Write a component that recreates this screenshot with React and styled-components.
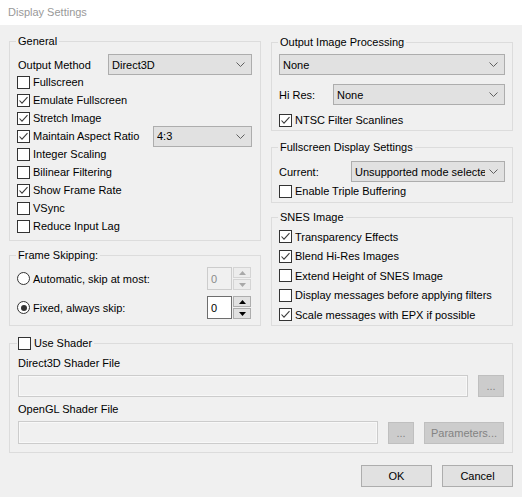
import React from 'react'
import styled, { createGlobalStyle } from 'styled-components'

const GlobalStyle = createGlobalStyle`
  html, body { margin: 0; padding: 0; }
  body {
    background: #f0f0f0;
    font-family: "Liberation Sans", Arial, sans-serif;
    font-size: 11px;
    color: #000;
  }
  * { box-sizing: border-box; }
`

const Window = styled.div`
  width: 522px;
  height: 497px;
  display: flex;
  flex-direction: column;
  background: #f0f0f0;
  overflow: hidden;
`

const TitleBar = styled.div`
  height: 25px;
  flex-shrink: 0;
  background: #fff;
  color: #999;
  padding: 0 0 1px 8px;
  display: flex;
  align-items: center;
  font-size: 11px;
`

const Content = styled.div`
  padding: 9px 9px 0 9px;
  display: flex;
  flex-direction: column;
`

const Columns = styled.div`
  display: grid;
  grid-template-columns: 252px 242px;
  column-gap: 10px;
  align-items: start;
`

const Column = styled.div`
  display: flex;
  flex-direction: column;
  padding-top: ${p => p.$pt || 0}px;
`

const Group = styled.fieldset`
  margin: ${p => p.$mt || 0}px 0 0 0;
  padding: ${p => p.$pt || 0}px ${p => p.$pr || 8}px 0 ${p => p.$pl || 7}px;
  border: 1px solid #dcdcdc;
  height: ${p => p.$h}px;
  min-width: 0;
`

const Legend = styled.legend`
  padding: 0 2px 0 ${p => p.$pl ?? 2}px;
  margin-left: -1px;
  line-height: 14px;
  font-size: 11px;
`

const Stack = styled.div`
  display: flex;
  flex-direction: column;
  gap: ${p => p.$gap || 0}px;
`

const Row = styled.div`
  display: flex;
  align-items: center;
  height: ${p => p.$h || 21}px;
  margin-top: ${p => p.$mt || 0}px;
  margin-bottom: ${p => p.$mb || 0}px;
`

const Label = styled.span`
  padding-left: ${p => p.$pl || 0}px;
  white-space: nowrap;
`

const CheckRow = styled.label`
  display: flex;
  align-items: center;
  gap: 3px;
  height: ${p => p.$h || 18}px;
  margin-top: ${p => p.$mt || 0}px;
  white-space: nowrap;
`

const Box = styled.span`
  width: 13px;
  height: 13px;
  flex-shrink: 0;
  border: 1px solid #333;
  background: #fff;
  display: inline-flex;
  align-items: center;
  justify-content: center;
`

const RadioCircle = styled.span`
  width: 13px;
  height: 13px;
  flex-shrink: 0;
  border: 1px solid #333;
  border-radius: 50%;
  background: #fff;
  display: inline-flex;
  align-items: center;
  justify-content: center;
  &::after {
    content: "";
    width: 6px;
    height: 6px;
    border-radius: 50%;
    background: ${p => (p.$on ? '#333' : 'transparent')};
  }
`

const RadioRow = styled.label`
  display: flex;
  align-items: center;
  gap: 3px;
  height: 23px;
  white-space: nowrap;
`

const SelectBox = styled.div`
  display: flex;
  align-items: center;
  width: ${p => p.$w}px;
  height: ${p => p.$h || 21}px;
  flex-shrink: 0;
  margin-left: auto;
  background: #e1e1e1;
  border: 1px solid #adadad;
  padding: 0 6px 0 3px;
  gap: 4px;
`

const SelectText = styled.span`
  flex: 1;
  min-width: 0;
  overflow: hidden;
  white-space: nowrap;
`

const Spinner = styled.div`
  display: flex;
  gap: 1px;
  height: 23px;
  margin-left: auto;
`

const SpinInput = styled.div`
  width: 25px;
  height: 23px;
  border: 1px solid ${p => (p.$off ? '#cccccc' : '#6e6e6e')};
  background: ${p => (p.$off ? '#f0f0f0' : '#fff')};
  color: ${p => (p.$off ? '#8a8a8a' : '#000')};
  padding-left: 3px;
  display: flex;
  align-items: center;
`

const SpinButtons = styled.div`
  width: 18px;
  display: flex;
  flex-direction: column;
  gap: 1px;
`

const SpinButton = styled.div`
  flex: 1;
  border: 1px solid ${p => (p.$off ? '#d4d4d4' : '#adadad')};
  background: ${p => (p.$off ? '#ececec' : '#e1e1e1')};
  display: flex;
  align-items: center;
  justify-content: center;
`

const TextBox = styled.div`
  width: ${p => p.$w}px;
  height: ${p => p.$h || 22}px;
  flex-shrink: 0;
  border: 1px solid #cccccc;
  box-shadow: inset 0 0 0 1px #f8f8f8;
  background: #f0f0f0;
`

const SmallButton = styled.div`
  width: ${p => p.$w}px;
  height: 22px;
  flex-shrink: 0;
  margin-left: 10px;
  background: #cccccc;
  border: 1px solid #bfbfbf;
  color: #838383;
  display: flex;
  align-items: center;
  justify-content: center;
  white-space: nowrap;
`

const ButtonBar = styled.div`
  display: flex;
  justify-content: flex-end;
  gap: 10px;
  margin-top: 12px;
`

const DialogButton = styled.button`
  width: 71px;
  height: 22px;
  background: #e1e1e1;
  border: 1px solid #adadad;
  font-family: inherit;
  font-size: 11px;
  color: #000;
  padding: 0;
`

const Chevron = () => (
  <svg width="9" height="5" viewBox="0 0 9 5">
    <path d="M0.5 0.5 L4.5 4.5 L8.5 0.5" fill="none" stroke="#606060" strokeWidth="1" />
  </svg>
)

const Arrow = ({ up, off }) => (
  <svg width="7" height="4" viewBox="0 0 7 4">
    <path d={up ? 'M0 4 L3.5 0 L7 4 Z' : 'M0 0 L3.5 4 L7 0 Z'} fill={off ? '#a8a8a8' : '#000'} />
  </svg>
)

const Check = ({ on, label, h, mt }) => (
  <CheckRow $h={h} $mt={mt}>
    <Box>
      {on && (
        <svg width="11" height="11" viewBox="0 0 11 11">
          <polyline points="1.5,5.5 4,8.2 9.5,2.2" fill="none" stroke="#3a3a3a" strokeWidth="1.1" />
        </svg>
      )}
    </Box>
    {label}
  </CheckRow>
)

const Select = ({ w, value, h }) => (
  <SelectBox $w={w} $h={h}>
    <SelectText>{value}</SelectText>
    <Chevron />
  </SelectBox>
)

const Spin = ({ off }) => (
  <Spinner>
    <SpinInput $off={off}>0</SpinInput>
    <SpinButtons>
      <SpinButton $off={off}><Arrow up off={off} /></SpinButton>
      <SpinButton $off={off}><Arrow off={off} /></SpinButton>
    </SpinButtons>
  </Spinner>
)

const generalChecks = [
  ['Fullscreen', false],
  ['Emulate Fullscreen', true],
  ['Stretch Image', true],
  ['Maintain Aspect Ratio', true],
  ['Integer Scaling', false],
  ['Bilinear Filtering', false],
  ['Show Frame Rate', true],
  ['VSync', false],
  ['Reduce Input Lag', false],
]

const snesChecks = [
  ['Transparency Effects', true],
  ['Blend Hi-Res Images', true],
  ['Extend Height of SNES Image', false],
  ['Display messages before applying filters', false],
  ['Scale messages with EPX if possible', true],
]

export default function App() {
  return (
    <Window>
      <GlobalStyle />
      <TitleBar>Display Settings</TitleBar>
      <Content>
        <Columns>
          <Column>
            <Group $h={207} $pt={6}>
              <Legend>General</Legend>
              <Row $h={21} $mb={-2}>
                <Label $pl={1}>Output Method</Label>
                <Select w={144} value="Direct3D" />
              </Row>
              {generalChecks.map(([label, on]) =>
                label === 'Maintain Aspect Ratio' ? (
                  <Row key={label} $h={18}>
                    <Check on={on} label={label} />
                    <Select w={99} value="4:3" />
                  </Row>
                ) : (
                  <Check key={label} on={on} label={label} />
                )
              )}
            </Group>
            <Group $mt={7} $h={78} $pt={5} $pr={9}>
              <Legend>Frame Skipping:</Legend>
              <Stack $gap={6}>
                <Row $h={23}>
                  <RadioRow><RadioCircle />Automatic, skip at most:</RadioRow>
                  <Spin off />
                </Row>
                <Row $h={23}>
                  <RadioRow><RadioCircle $on />Fixed, always skip:</RadioRow>
                  <Spin />
                </Row>
              </Stack>
            </Group>
          </Column>
          <Column $pt={1}>
            <Group $h={96} $pt={5} $pr={7}>
              <Legend>Output Image Processing</Legend>
              <Row>
                <Select w={226} value="None" />
              </Row>
              <Row $mt={9}>
                <Label>Hi Res:</Label>
                <Select w={172} value="None" />
              </Row>
              <Check on label="NTSC Filter Scanlines" h={16} mt={7} />
            </Group>
            <Group $mt={9} $h={63} $pt={7} $pr={7}>
              <Legend>Fullscreen Display Settings</Legend>
              <Row>
                <Label>Current:</Label>
                <Select w={154} value="Unsupported mode selected" />
              </Row>
              <Check label="Enable Triple Buffering" />
            </Group>
            <Group $mt={7} $h={116} $pt={3} $pr={7}>
              <Legend>SNES Image</Legend>
              {snesChecks.map(([label, on]) => (
                <Check key={label} on={on} label={label} h={19.5} />
              ))}
            </Group>
          </Column>
        </Columns>
        <Group $mt={10} $h={117} $pt={7} $pl={8} $pr={8}>
          <Legend $pl={1}>
            <Check label="Use Shader" h={14} />
          </Legend>
          <Stack $gap={6}>
            <Label>Direct3D Shader File</Label>
            <Row $h={22}>
              <TextBox $w={450} />
              <SmallButton $w={26}>...</SmallButton>
            </Row>
            <Label>OpenGL Shader File</Label>
            <Row $h={23}>
              <TextBox $w={360} $h={23} />
              <SmallButton $w={26}>...</SmallButton>
              <SmallButton $w={80}>Parameters...</SmallButton>
            </Row>
          </Stack>
        </Group>
        <ButtonBar>
          <DialogButton>OK</DialogButton>
          <DialogButton>Cancel</DialogButton>
        </ButtonBar>
      </Content>
    </Window>
  )
}
